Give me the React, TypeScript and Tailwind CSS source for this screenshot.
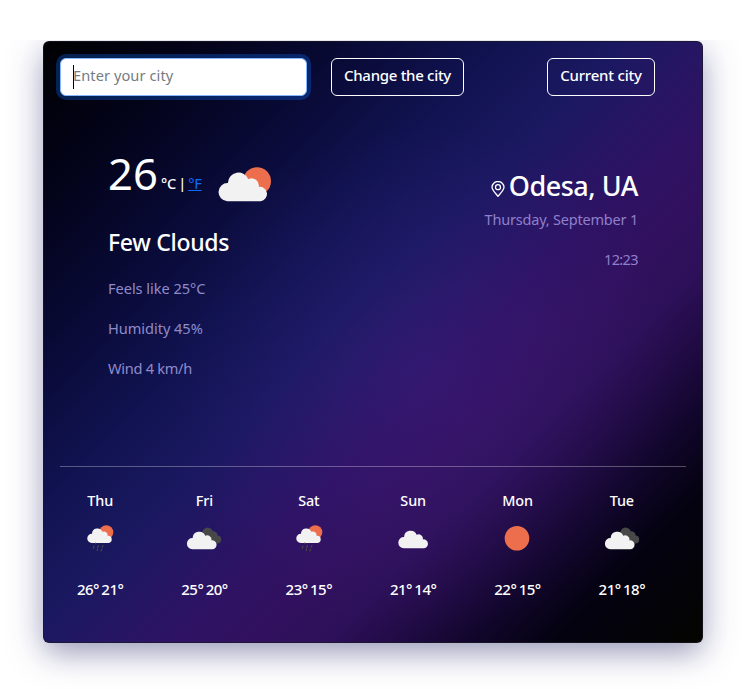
import React from "react";

type Kind = "rain" | "broken" | "cloud" | "sun";

// Puffy cloud on a 50x34 grid
const CLOUD =
  "M9 34.5A8.8 8.8 0 0 1 9.6 16.9 10.4 10.4 0 0 1 29.6 13.2 7 7 0 0 1 39.6 20.6 7 7 0 0 1 41.5 34.5Z";

function Cloud({ transform, fill = "#f2f2f2" }: { transform?: string; fill?: string }) {
  return <path d={CLOUD} fill={fill} transform={transform} />;
}

function WeatherIcon({ kind }: { kind: Kind }) {
  return (
    <svg className="mt-1 block h-[50px] w-[50px]" viewBox="0 0 50 50" aria-hidden="true">
      {kind === "rain" && (
        <>
          <circle cx="31.3" cy="17.2" r="7" fill="#ec6e4c" />
          <Cloud transform="translate(12 10) scale(.52)" />
          <g stroke="#484848" strokeWidth="1.2" strokeLinecap="round">
            <path d="M20.6 28v.6M19 31.4l-.6 1.8M23.4 30.8l-.8 2M28 30.4l-.8 2M22.2 35.6l.4-1.2M26 36l.7-1.8" />
          </g>
        </>
      )}
      {kind === "broken" && (
        <>
          <circle cx="28.6" cy="17.8" r="5.3" fill="#484848" />
          <circle cx="34.4" cy="20.4" r="4.2" fill="#484848" />
          <circle cx="38.2" cy="24.6" r="4" fill="#484848" />
          <path d="M28 18h7l3.2 10.6H28Z" fill="#484848" />
          <Cloud transform="translate(7.6 12.4) scale(.63)" />
        </>
      )}
      {kind === "cloud" && <Cloud transform="translate(10 11.4) scale(.63)" />}
      {kind === "sun" && <circle cx="25" cy="23.3" r="12.3" fill="#ec6e4c" />}
    </svg>
  );
}

const days: { day: string; kind: Kind; temps: string }[] = [
  { day: "Thu", kind: "rain", temps: "26° 21°" },
  { day: "Fri", kind: "broken", temps: "25° 20°" },
  { day: "Sat", kind: "rain", temps: "23° 15°" },
  { day: "Sun", kind: "cloud", temps: "21° 14°" },
  { day: "Mon", kind: "sun", temps: "22° 15°" },
  { day: "Tue", kind: "broken", temps: "21° 18°" },
];

export default function App() {
  return (
    <div className="h-[689px] w-[751px] overflow-hidden bg-white pt-10 font-['Noto_Sans',sans-serif] text-white">
      <main className="h-[649px] overflow-hidden pt-px pl-[43px]">
        <section className="flex h-[602px] w-[660px] flex-col rounded-md border border-[#1a1a24]/70 bg-[radial-gradient(circle_at_58%_56%,rgba(90,50,180,0.16)_0%,rgba(60,20,120,0)_50%),linear-gradient(135deg,#010103_0%,#03031a_13%,#090a36_25%,#111352_37%,#1a1860_46%,#251664_52%,#2e1263_58%,#31115f_64%,#2d1059_70%,#210b45_75.5%,#12062d_81%,#040210_88%,#040400_100%)] bg-origin-border px-4 pt-4 shadow-[0_13px_27px_-5px_rgba(50,50,93,0.25),0_8px_36px_0_rgba(60,60,140,0.35)]">
          <form className="flex h-[38px] shrink-0 items-stretch" onSubmit={(e) => e.preventDefault()}>
            <div className="flex w-[247px] items-center rounded-md border border-[#86b7fe] bg-white pl-3 text-[14.6px] text-[#757b81] ring-4 ring-[#0d6efd]/30">
              <span className="h-6 w-px bg-black" />
              <span className="-ml-px pb-0.5 tracking-[0.08px]">Enter your city</span>
            </div>
            <button className="ml-[24px] w-[133px] rounded-md border border-white pb-[3px] text-[15px] font-medium whitespace-nowrap tracking-[-0.3px]">
              Change the city
            </button>
            <button className="ml-[83px] w-[108px] rounded-md border border-white pb-[3px] text-[15px] font-medium whitespace-nowrap tracking-[-0.2px]">
              Current city
            </button>
          </form>

          <div className="flex h-[371px] justify-between border-b border-white/30 pr-12 pl-12">
            <div className="pt-[51px]">
              <div className="flex h-[60px] items-start">
                <span className="-mt-[1px] w-[50px] text-[43.5px] leading-[54px] tracking-[0.2px]">26</span>
                <span className="ml-[3px] pt-[26px] text-[14.6px] leading-5 font-medium whitespace-nowrap tracking-[-0.2px] [word-spacing:-1.5px]">
                  °C | <a className="font-normal text-[#0d6efd] underline">°F</a>
                </span>
                <svg className="mt-[19px] ml-[16px] h-[36px] w-[54px]" viewBox="0 0 54 36" aria-hidden="true">
                  <circle cx="39" cy="15.2" r="14" fill="#ec6e4c" />
                  <Cloud transform="translate(0 -.4) scale(1.03)" />
                </svg>
              </div>
              <h2 className="mt-[19px] text-[23px] leading-8 font-medium tracking-[-0.3px]">Few Clouds</h2>
              <div className="mt-[10px] text-[14.6px] leading-10 tracking-[-0.05px] text-[#8f8bcb]">
                <p>Feels like 25°C</p>
                <p>Humidity 45%</p>
                <p className="tracking-[-0.3px]">Wind 4 km/h</p>
              </div>
            </div>
            <div className="pt-[70px] text-right">
              <h1 className="flex h-[40px] items-center justify-end text-[27px] font-medium tracking-[-0.5px]">
                <svg className="mt-[5px] mr-[3px] h-4 w-4" viewBox="0 0 16 16" fill="none" stroke="white" strokeWidth="1.3" aria-hidden="true">
                  <path d="M8 15.3C6 12.7 2 9 2 6.2a6 5.7 0 0 1 12 0C14 9 10 12.7 8 15.3Z" />
                  <circle cx="8" cy="6.2" r="2.5" />
                </svg>
                Odesa, UA
              </h1>
              <div className="-mt-[7px] text-[14.5px] leading-10 tracking-[-0.2px] text-[#8f80cb]">
                <p>Thursday, September 1</p>
                <p className="tracking-[-0.6px]">12:23</p>
              </div>
            </div>
          </div>

          <div className="-mx-4 grid w-[626px] grid-cols-6 self-start text-center text-[14.4px] font-medium">
            {days.map((d) => (
              <div key={d.day} className="ml-[8px] flex flex-col items-center pt-6">
                <span className="leading-5 tracking-[-0.1px]">{d.day}</span>
                <WeatherIcon kind={d.kind} />
                <span className="mt-[14px] text-[15px] leading-5 whitespace-nowrap tracking-[-0.5px] [word-spacing:-1px]">{d.temps}</span>
              </div>
            ))}
          </div>
        </section>
      </main>
    </div>
  );
}
